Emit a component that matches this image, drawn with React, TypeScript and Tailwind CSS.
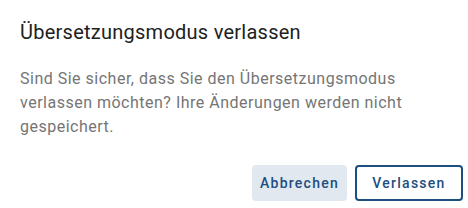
import React from "react";

export default function App() {
  return (
    <div className="w-[468px] h-[208px] bg-white" style={{ fontFamily: "Roboto, sans-serif" }}>
      <div className="px-5 pt-[16px]">
        <h2 className="text-[20px] leading-[32px] font-normal text-[#212121] tracking-[0.25px]">
          Übersetzungsmodus verlassen
        </h2>
        <p className="mt-[19px] text-[16px] leading-[24px] text-[#757575] tracking-[0.5px]">
          Sind Sie sicher, dass Sie den Übersetzungsmodus verlassen möchten? Ihre Änderungen werden nicht gespeichert.
        </p>
      </div>
      <div className="flex justify-end gap-2 px-[5px] mt-[26px]">
        <button className="h-9 w-[95px] rounded bg-[#e2e8f0] text-[14px] font-medium tracking-[1.25px] text-[#1d4e80]">
          Abbrechen
        </button>
        <button className="h-9 w-[108px] rounded border-2 border-[#1d4e80] bg-white text-[14px] font-medium tracking-[1.25px] text-[#1d4e80]">
          Verlassen
        </button>
      </div>
    </div>
  );
}
